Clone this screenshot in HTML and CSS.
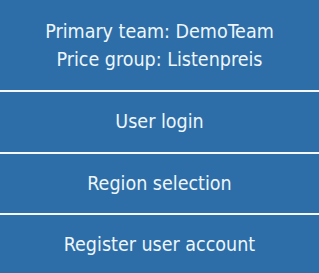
FILE: index.html
```html
<!DOCTYPE html>
<html>
  <head>
    <meta charset="utf-8" />
    <title>Account menu</title>
    <link rel="stylesheet" href="styles.css">
  </head>
  <body>
    <div class="menu">
      <div class="info">
        <div>Primary team: DemoTeam</div>
        <div>Price group: Listenpreis</div>
      </div>
      <a class="item" href="#">User login</a>
      <a class="item" href="#">Region selection</a>
      <a class="item" href="#">Register user account</a>
    </div>
  </body>
</html>
```
FILE: styles.css
```css
body {
  margin: 0;
  background: #2d6ea8;
}

.menu {
  font-family: "DejaVu Sans Condensed", "DejaVu Sans", sans-serif;
  font-size: 19.5px;
  color: #eef6fb;
  text-align: center;
}

.info {
  height: 92px;
  line-height: 28px;
  padding-top: 18px;
  box-sizing: border-box;
  border-bottom: 2px solid #f4f8fc;
}

.item {
  display: block;
  height: 59px;
  line-height: 59px;
  color: inherit;
  text-decoration: none;
  border-bottom: 2px solid #f4f8fc;
}

.item:first-of-type {
  height: 60px;
  line-height: 60px;
}

.item:last-child {
  border-bottom: none;
}
```
